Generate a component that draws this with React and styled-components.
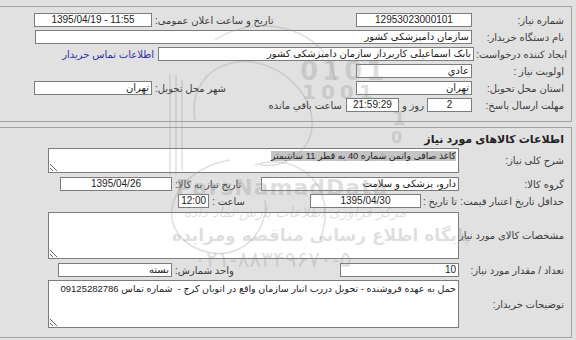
import React from 'react'
import styled, { createGlobalStyle } from 'styled-components'

const Global = createGlobalStyle`
  html, body {
    margin: 0;
    padding: 0;
    background: #e1e1e1;
  }
  body {
    font-family: "Liberation Sans", "DejaVu Sans", sans-serif;
    font-size: 10px;
    color: #3c3c3c;
  }
`

const Page = styled.div`
  position: relative;
  direction: rtl;
  width: 576px;
  height: 340px;
  box-sizing: border-box;
  padding: 6px 4px 0 0;
  overflow: hidden;
`

const Panel = styled.section`
  display: flex;
  flex-direction: column;
  gap: ${(p) => p.$gap || 0}px;
  border: 1px solid #a2a2a2;
  border-left: none;
  padding: ${(p) => p.$pad};
  margin-bottom: 5px;
`

const Row = styled.div`
  display: flex;
  align-items: center;
  height: ${(p) => p.$h || 14}px;
  margin-top: ${(p) => p.$mt || 0}px;
  flex: none;
`

const Label = styled.div`
  flex: none;
  width: ${(p) => p.$w}px;
  box-sizing: border-box;
  padding-right: ${(p) => p.$pr || 7}px;
  white-space: nowrap;
`

const Text = styled.span`
  white-space: nowrap;
  margin: 0 ${(p) => p.$m || 3}px;
`

const Field = styled.div`
  flex: none;
  width: ${(p) => p.$w}px;
  height: 14px;
  box-sizing: border-box;
  background: #fff;
  border: 1px solid #7c7c7c;
  padding: 0 2px;
  line-height: 12px;
  color: #222;
  direction: ${(p) => (p.$center ? 'ltr' : 'rtl')};
  text-align: ${(p) => (p.$center ? 'center' : 'right')};
  white-space: nowrap;
  overflow: hidden;
`

const Side = styled.div`
  display: flex;
  align-items: center;
  gap: 3px;
  margin-right: ${(p) => (p.$gap != null ? `${p.$gap}px` : 'auto')};
  margin-left: ${(p) => p.$end || 0}px;
`

const Link = styled.a`
  color: #2f2fa8;
  margin-right: 4px;
  white-space: nowrap;
  text-decoration: none;
`

const Title = styled.div`
  height: 16px;
  line-height: 16px;
  padding-right: 7px;
  font-weight: bold;
  font-size: 11px;
  color: #222;
`

const TextBox = styled.div`
  flex: 1;
  height: 100%;
  box-sizing: border-box;
  background: #fff;
  border: 1px solid #7c7c7c;
  padding: 1px 2px;
  color: #222;
  font-size: ${(p) => p.$fs || 9.3}px;
  white-space: pre;
  line-height: 13px;
  overflow: hidden;
  resize: both;
`

const Mark = styled.span`
  background: #c4c4c4;
`

const Watermark = styled.div`
  position: absolute;
  inset: 0;
  pointer-events: none;
  color: rgba(140, 140, 140, 0.28);
  font-family: "DejaVu Sans", sans-serif;
`

const WmText = styled.div`
  position: absolute;
  left: ${(p) => p.$x}px;
  top: ${(p) => p.$y}px;
  font-size: ${(p) => p.$s}px;
  font-weight: ${(p) => (p.$bold ? 'bold' : 'normal')};
  font-style: ${(p) => (p.$italic ? 'italic' : 'normal')};
  letter-spacing: ${(p) => p.$ls || 0}px;
  white-space: nowrap;
  direction: ${(p) => p.$dir || 'ltr'};
`

const WmLogo = styled.svg`
  position: absolute;
  left: 0;
  top: 0;
`

export default function App() {
  return (
    <>
      <Global />
      <Page>
        <Panel $pad="6px 0 9px 34px" $gap={3}>
          <Row>
            <Label $w={99}>شماره نیاز:</Label>
            <Field $w={116} $center>12953023000101</Field>
            <Side>
              <span>تاریخ و ساعت اعلان عمومی:</span>
              <Field $w={118} $center>1395/04/19 - 11:55</Field>
            </Side>
          </Row>
          <Row>
            <Label $w={99}>نام دستگاه خریدار:</Label>
            <Field $w={437}>سازمان دامپزشکی کشور</Field>
          </Row>
          <Row>
            <Label $w={97} $pr={4}>ایجاد کننده درخواست:</Label>
            <Field $w={316}>بابک اسماعیلی کاربرداز سازمان دامپزشکی کشور</Field>
            <Link href="#">اطلاعات تماس خریدار</Link>
          </Row>
          <Row>
            <Label $w={99}>اولویت نیاز :</Label>
            <Field $w={116}>عادي</Field>
          </Row>
          <Row>
            <Label $w={99}>استان محل تحویل:</Label>
            <Field $w={116}>تهران</Field>
            <Side>
              <span>شهر محل تحویل:</span>
              <Field $w={118}>تهران</Field>
            </Side>
          </Row>
          <Row>
            <Label $w={99}>مهلت ارسال پاسخ:</Label>
            <Field $w={45} $center>2</Field>
            <Text>روز و</Text>
            <Field $w={53} $center>21:59:29</Field>
            <Text $m={4}>ساعت باقي مانده</Text>
          </Row>
        </Panel>

        <Panel $pad="3px 0 9px 48px">
          <Title>اطلاعات کالاهای مورد نیاز</Title>
          <Row $h={25} $mt={1}>
            <Label $w={112}>شرح کلی نیاز:</Label>
            <TextBox>
              <Mark>کاغذ صافی واتمن شماره 40 به قطر 11 سانتیمتر</Mark>
            </TextBox>
          </Row>
          <Row $mt={4}>
            <Label $w={112}>گروه کالا:</Label>
            <Field $w={198}>دارو، پزشکی و سلامت</Field>
            <Side $end={12}>
              <span>تاریخ نیاز به کالا:</span>
              <Field $w={112} $center>1395/04/26</Field>
            </Side>
          </Row>
          <Row $mt={3}>
            <Label $w={112}>حداقل تاریخ اعتبار قیمت:</Label>
            <Text $m={2}>تا تاریخ :</Text>
            <Field $w={111} $center>1395/04/30</Field>
            <Side $gap={65}>
              <span>ساعت :</span>
              <Field $w={31} $center>12:00</Field>
            </Side>
          </Row>
          <Row $h={47} $mt={4}>
            <Label $w={112}>مشخصات کالای مورد نیاز:</Label>
            <TextBox />
          </Row>
          <Row $mt={4}>
            <Label $w={112}>تعداد / مقدار مورد نیاز:</Label>
            <Field $w={119}>10</Field>
            <Side $end={10}>
              <span>واحد شمارش:</span>
              <Field $w={114}>بسته</Field>
            </Side>
          </Row>
          <Row $h={48} $mt={3}>
            <Label $w={112}>توضیحات خریدار:</Label>
            <TextBox $fs={9.5}>{'حمل به عهده فروشنده - تحویل دررب انبار سازمان واقع در اتوبان کرج -  شماره تماس 09125282786'}</TextBox>
          </Row>
        </Panel>

        <Watermark>
          <WmLogo width="576" height="340" viewBox="0 0 576 340" fill="none" stroke="rgba(150,150,150,0.3)" strokeWidth="1.5">
            <path d="M170 75 L170 175 M176 75 L176 175 M182 80 L182 170" />
            <path d="M195 120 C185 60 260 40 300 90 C330 130 300 170 260 165" />
            <path d="M230 160 C170 170 150 230 200 250 C240 265 270 230 265 200" />
            <path d="M255 165 C300 150 340 190 320 240" />
            <path d="M215 40 C260 10 330 30 335 80" />
          </WmLogo>
          <WmText $x={300} $y={56} $s={26} $bold $ls={4}>0101</WmText>
          <WmText $x={302} $y={80} $s={20} $bold $ls={5}>1001</WmText>
          <WmText $x={392} $y={106} $s={20} $bold>1</WmText>
          <WmText $x={391} $y={128} $s={16} $bold>0</WmText>
          <WmText $x={176} $y={175} $s={22} $bold $ls={1}>ParsNamadData</WmText>
          <WmText $x={184} $y={204} $s={14} $italic $dir="rtl">مرکز فراوری اطلاعات پارس نماد داده</WmText>
          <WmText $x={172} $y={225} $s={17} $bold $dir="rtl">پایگاه اطلاع رسانی مناقصه ومزایده</WmText>
          <WmText $x={194} $y={247} $s={22} $dir="ltr">۰۲۱-۸۸۳۴۹۶۷۰-۵</WmText>
        </Watermark>
      </Page>
    </>
  )
}
